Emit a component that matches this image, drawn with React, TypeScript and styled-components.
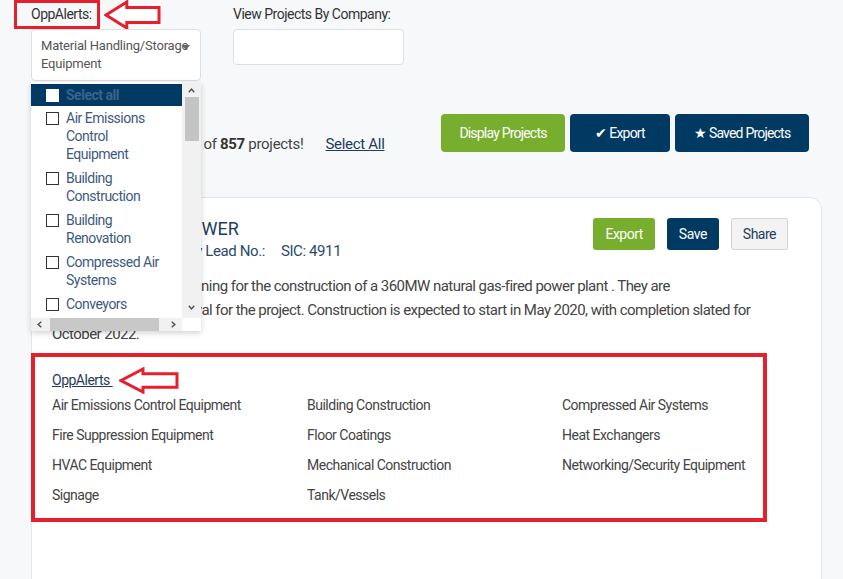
import React from 'react';
import styled, { createGlobalStyle } from 'styled-components';

const GlobalStyle = createGlobalStyle`
  body {
    margin: 0;
    background: #f7f8fa;
    font-family: Roboto, 'Noto Sans', Arial, sans-serif;
    letter-spacing: -0.5px;
    color: #444;
  }
  button {
    font-family: Roboto, 'Noto Sans', Arial, sans-serif;
    letter-spacing: -0.5px;
  }
`;

const Page = styled.div`
  width: 843px;
  height: 579px;
  overflow: hidden;
  box-sizing: border-box;
  padding: 0 21px 0 31px;
`;

const Filters = styled.div`
  display: flex;
  gap: 32px;
`;

const FilterGroup = styled.div`
  position: relative;
  width: 170px;
  display: flex;
  flex-direction: column;
`;

const LabelRow = styled.div`
  display: flex;
  align-items: center;
  gap: 4px;
  height: 29px;
`;

const AnnotatedLabel = styled.span`
  box-sizing: border-box;
  height: 29px;
  margin-left: -17px;
  padding: 2px 5px 0 14px;
  border: 3px solid #e3202b;
  font-size: 14px;
  line-height: 19px;
  color: #333;
`;

const Label = styled.span`
  font-size: 14px;
  line-height: 29px;
  color: #333;
  white-space: nowrap;
`;

const SelectBox = styled.div`
  position: relative;
  box-sizing: border-box;
  height: 52px;
  padding: 7px 0 0 9px;
  background: #fff;
  border: 1px solid #dcdfe3;
  border-radius: 4px;
  font-size: 13px;
  line-height: 18px;
  letter-spacing: -0.2px;
  color: #555;
`;

const Caret = styled.span`
  position: absolute;
  right: 10px;
  top: 15px;
  border-left: 4px solid transparent;
  border-right: 4px solid transparent;
  border-top: 5px solid #666;
`;

const TextInput = styled.div`
  box-sizing: border-box;
  height: 36px;
  width: 171px;
  background: #fff;
  border: 1px solid #dcdfe3;
  border-radius: 4px;
`;

const Dropdown = styled.div`
  position: absolute;
  top: 82px;
  left: 0;
  width: 170px;
  height: 249px;
  background: #fff;
  box-shadow: 0 2px 6px rgba(0, 0, 0, 0.18);
  display: grid;
  grid-template-columns: 1fr 19px;
  grid-template-rows: 1fr 13px;
  z-index: 5;
  overflow: hidden;
`;

const OptionList = styled.div`
  padding-top: 2px;
  overflow: hidden;
`;

const Option = styled.div<{ $active?: boolean }>`
  display: flex;
  align-items: flex-start;
  gap: 7px;
  padding: ${(p) => (p.$active ? '2px 18px 2px 15px' : '3px 18px 3px 15px')};
  background: ${(p) => (p.$active ? '#003a63' : 'transparent')};
  font-size: 14px;
  line-height: 18px;
  font-weight: ${(p) => (p.$active ? 700 : 400)};
  color: ${(p) => (p.$active ? '#3a628c' : '#3d5a7e')};
`;

const Check = styled.span<{ $filled?: boolean }>`
  flex: none;
  box-sizing: border-box;
  width: 13px;
  height: 13px;
  margin-top: 3px;
  background: #fff;
  border: 1px solid ${(p) => (p.$filled ? '#fff' : '#333')};
`;

const VScroll = styled.div`
  background: #f1f1f1;
  display: flex;
  flex-direction: column;
  align-items: center;
  padding: 4px 0 6px;
`;

const VThumb = styled.div`
  width: 14px;
  height: 44px;
  margin-top: 2px;
  background: #c4c4c4;
`;

const VSpacer = styled.div`
  flex: 1;
`;

const HScroll = styled.div`
  background: #f1f1f1;
  display: flex;
  align-items: center;
  padding: 0 4px;
  gap: 6px;
`;

const HThumb = styled.div`
  flex: 1;
  height: 13px;
  background: #c8c8c8;
  margin-right: 4px;
`;

const Corner = styled.div`
  background: #fff;
`;

const Toolbar = styled.div`
  display: flex;
  align-items: flex-end;
  justify-content: space-between;
  margin-top: 33px;
  padding-right: 13px;
`;

const Summary = styled.div`
  margin-bottom: -2px;
  font-size: 15px;
  line-height: 20px;
  letter-spacing: -0.3px;
  color: #444;
  b {
    color: #333;
  }
`;

const SelectAll = styled.a`
  margin-left: 22px;
  color: #1f3b5a;
  text-decoration: underline;
`;

const ButtonGroup = styled.div`
  display: flex;
  gap: 5px;
`;

const ToolButton = styled.button<{ $green?: boolean; $w: number }>`
  width: ${(p) => p.$w}px;
  height: 38px;
  border: none;
  border-radius: 4px;
  background: ${(p) => (p.$green ? '#78ae2e' : '#003a63')};
  color: #fff;
  font-size: 14px;
  letter-spacing: -0.8px;
  display: flex;
  align-items: center;
  justify-content: center;
  gap: 3px;
`;

const Card = styled.div`
  margin-top: 45px;
  background: #fff;
  border: 1px solid #e2e5e9;
  border-radius: 12px;
  padding: 20px 33px 40px 20px;
  height: 600px;
`;

const CardHeader = styled.div`
  display: flex;
  justify-content: space-between;
  align-items: flex-start;
`;

const Title = styled.div`
  font-size: 18px;
  line-height: 22px;
  letter-spacing: 0;
  color: #1f3d5e;
`;

const SubLine = styled.div`
  display: flex;
  gap: 16px;
  font-size: 15px;
  line-height: 22px;
  letter-spacing: -0.4px;
  color: #2a4a6c;
`;

const CardActions = styled.div`
  display: flex;
  gap: 12px;
`;

const SmallButton = styled.button<{ $kind: 'green' | 'navy' | 'plain' }>`
  height: 32px;
  padding: 0 11px;
  border-radius: 3px;
  font-size: 14px;
  border: 1px solid ${(p) => (p.$kind === 'plain' ? '#cfd2d6' : 'transparent')};
  background: ${(p) =>
    p.$kind === 'green' ? '#78ae2e' : p.$kind === 'navy' ? '#003a63' : '#f3f3f3'};
  color: ${(p) => (p.$kind === 'plain' ? '#1f3d5e' : '#fff')};
`;

const Description = styled.p`
  margin: 12px 0 0;
  max-width: 725px;
  font-size: 15px;
  line-height: 24px;
  letter-spacing: -0.55px;
  color: #444;
`;

const AlertBox = styled.div`
  margin: 7px 0 0 -21px;
  width: 736px;
  box-sizing: border-box;
  border: 4px solid #e3202b;
  padding: 13px 17px 8px;
`;

const LinkRow = styled.div`
  display: flex;
  align-items: center;
  gap: 6px;
  height: 20px;
`;

const AlertLink = styled.a`
  font-size: 14px;
  color: #1f3b5a;
  text-decoration: underline;
`;

const AlertGrid = styled.div`
  display: grid;
  grid-template-columns: 255px 255px 1fr;
`;

const AlertItem = styled.div`
  font-size: 14px;
  line-height: 30px;
  color: #444;
  white-space: nowrap;
`;

const Arrow = ({ w, h }: { w: number; h: number }) => (
  <svg width={w} height={h} viewBox={`0 0 ${w} ${h}`} style={{ flex: 'none' }}>
    <path
      d={`M2 ${h / 2} L${w * 0.4} 2 L${w * 0.4} ${h * 0.25} L${w - 2} ${h * 0.25} L${w - 2} ${
        h * 0.75
      } L${w * 0.4} ${h * 0.75} L${w * 0.4} ${h - 2} Z`}
      fill="#fff"
      stroke="#e3202b"
      strokeWidth="3"
      strokeLinejoin="miter"
    />
  </svg>
);

const Chevron = ({ dir }: { dir: 'up' | 'down' | 'left' | 'right' }) => {
  const rot = { up: 0, right: 90, down: 180, left: 270 }[dir];
  return (
    <svg width="9" height="9" viewBox="0 0 10 10" style={{ transform: `rotate(${rot}deg)`, flex: 'none' }}>
      <polyline points="2,7 5,3.5 8,7" fill="none" stroke="#505050" strokeWidth="1.6" />
    </svg>
  );
};

const options = [
  'Air Emissions Control Equipment',
  'Building Construction',
  'Building Renovation',
  'Compressed Air Systems',
  'Conveyors',
];

const alerts = [
  'Air Emissions Control Equipment',
  'Building Construction',
  'Compressed Air Systems',
  'Fire Suppression Equipment',
  'Floor Coatings',
  'Heat Exchangers',
  'HVAC Equipment',
  'Mechanical Construction',
  'Networking/Security Equipment',
  'Signage',
  'Tank/Vessels',
];

export default function App() {
  return (
    <Page>
      <GlobalStyle />
      <Filters>
        <FilterGroup>
          <LabelRow>
            <AnnotatedLabel>OppAlerts:</AnnotatedLabel>
            <Arrow w={57} h={30} />
          </LabelRow>
          <SelectBox>
            Material Handling/Storage Equipment
            <Caret />
          </SelectBox>
          <Dropdown>
            <OptionList>
              <Option $active>
                <Check $filled />
                Select all
              </Option>
              {options.map((o) => (
                <Option key={o}>
                  <Check />
                  {o}
                </Option>
              ))}
            </OptionList>
            <VScroll>
              <Chevron dir="up" />
              <VThumb />
              <VSpacer />
              <Chevron dir="down" />
            </VScroll>
            <HScroll>
              <Chevron dir="left" />
              <HThumb />
              <Chevron dir="right" />
            </HScroll>
            <Corner />
          </Dropdown>
        </FilterGroup>
        <FilterGroup>
          <Label>View Projects By Company:</Label>
          <TextInput />
        </FilterGroup>
      </Filters>

      <Toolbar>
        <Summary>
          You are now viewing 1 - 25 of <b>857</b> projects!
          <SelectAll>Select All</SelectAll>
        </Summary>
        <ButtonGroup>
          <ToolButton $green $w={124}>
            Display Projects
          </ToolButton>
          <ToolButton $w={100}>
            <span>✔</span>Export
          </ToolButton>
          <ToolButton $w={134}>
            <span>★</span>Saved Projects
          </ToolButton>
        </ButtonGroup>
      </Toolbar>

      <Card>
        <CardHeader>
          <div>
            <Title>ACME ENERGY POWER</Title>
            <SubLine>
              <span>Electric Utilities Industry Lead No.:</span>
              <span>SIC: 4911</span>
            </SubLine>
          </div>
          <CardActions>
            <SmallButton $kind="green">Export</SmallButton>
            <SmallButton $kind="navy">Save</SmallButton>
            <SmallButton $kind="plain">Share</SmallButton>
          </CardActions>
        </CardHeader>
        <Description>
          Acme Power LLC is planning for the construction of a 360MW natural gas-fired power plant . They are
          <br />
          currently seeking approval for the project. Construction is expected to start in May 2020, with
          completion slated for October 2022.
        </Description>
        <AlertBox>
          <LinkRow>
            <AlertLink>OppAlerts&nbsp;</AlertLink>
            <Arrow w={60} h={27} />
          </LinkRow>
          <AlertGrid>
            {alerts.map((a) => (
              <AlertItem key={a}>{a}</AlertItem>
            ))}
          </AlertGrid>
        </AlertBox>
      </Card>
    </Page>
  );
}
